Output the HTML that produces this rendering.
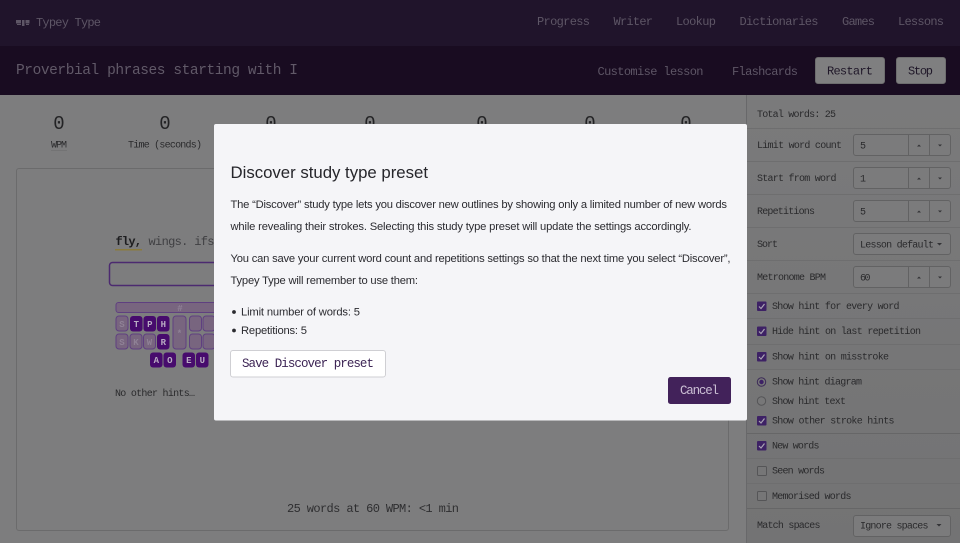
<!DOCTYPE html>
<html lang="en"><head><meta charset="utf-8"><title>Typey Type</title>
<style>
html,body{margin:0;padding:0;width:960px;height:543px;overflow:hidden;background:#7d7d7e}
.b{position:absolute}
svg{display:block;position:absolute;left:0;top:0}
text{font-family:"Liberation Mono",monospace;white-space:pre}
.n{font-size:12px;fill:#5e5666}
.s{font-size:10px;fill:#2a2a2c}
.m{font-family:"Liberation Sans",sans-serif;font-size:11.2px;fill:#2b2b30}
.k{font-size:9px;font-weight:bold;text-anchor:middle}
.div{stroke:#6e6e6f;stroke-width:1}
.dk{stroke:#666667;stroke-width:1}
.bx{fill:#7b7b7c;stroke:#626263;stroke-width:1}
</style></head><body>
<div class="b" style="left:0;top:0;width:960px;height:46px;background:#20142b"></div>
<div class="b" style="left:0;top:46px;width:960px;height:49px;background:#190c21"></div>
<div class="b" style="left:815px;top:57px;width:68px;height:25px;background:#7f7f80;border:1px solid #6d6d6e;border-radius:3px"></div>
<div class="b" style="left:896px;top:57px;width:48px;height:25px;background:#7f7f80;border:1px solid #6d6d6e;border-radius:3px"></div>
<div class="b" style="left:746px;top:95px;width:213px;height:448px;background:linear-gradient(#7a7a7b,#737374);border-left:1px solid #68686a"></div>
<div class="b" style="left:16px;top:168px;width:711px;height:361px;border:1px solid #6b6b6c;border-radius:3px"></div>
<svg width="960" height="543" viewBox="0 0 960 543" xmlns="http://www.w3.org/2000/svg">

<!-- logo -->
<g fill="#5e5666"><rect x="16" y="20" width="5" height="3.5"/><rect x="22" y="20" width="2.5" height="6"/><rect x="25.5" y="20" width="4" height="3.5"/><rect x="17" y="24" width="4" height="1"/><rect x="26" y="24" width="3" height="1"/></g>
<text x="36" y="26" class="n" textLength="65">Typey Type</text>
<text x="537" y="25" class="n" textLength="53">Progress</text>
<text x="613.5" y="25" class="n" textLength="39.5">Writer</text>
<text x="676" y="25" class="n" textLength="40">Lookup</text>
<text x="739.5" y="25" class="n" textLength="79">Dictionaries</text>
<text x="842" y="25" class="n" textLength="33">Games</text>
<text x="898" y="25" class="n" textLength="46">Lessons</text>

<text x="16" y="74" style="font-size:14.5px;fill:#615968" textLength="282">Proverbial phrases starting with I</text>
<text x="597.5" y="75" class="n" textLength="106">Customise lesson</text>
<text x="732" y="75" class="n" textLength="66">Flashcards</text>
<text x="827" y="74.5" style="font-size:12px;fill:#1f1728" textLength="46">Restart</text>
<text x="908" y="74.5" style="font-size:12px;fill:#1f1728" textLength="25">Stop</text>

<!-- stats -->
<g style="font-size:19px;fill:#232325" text-anchor="middle">
<text x="59" y="129">0</text><text x="165" y="129">0</text><text x="271" y="129">0</text><text x="370" y="129">0</text><text x="482" y="129">0</text><text x="590" y="129">0</text><text x="686" y="129">0</text></g>
<text x="51" y="147.5" class="s" textLength="16">WPM</text>
<line x1="51" x2="67" y1="150.5" y2="150.5" stroke="#737374"/>
<text x="128" y="147.5" class="s" textLength="74">Time (seconds)</text>

<!-- lesson -->
<text x="115.5" y="245" style="font-size:12px;font-weight:bold;fill:#1d1d1f" textLength="26.5">fly,</text>
<text x="148.5" y="245" style="font-size:12px;fill:#3f3f42" textLength="66">wings. ifs</text>
<rect x="115" y="249" width="27" height="1.5" fill="#8a7a3c"/>
<rect x="109.5" y="262.5" width="300" height="23" rx="3" fill="#7d7d7e" stroke="#4c2a70" stroke-width="1.5"/>

<!-- keyboard -->
<g fill="#78657f" stroke="#5f3f80" stroke-width="1">
<rect x="116" y="302.5" width="110" height="10" rx="2.5"/>
<rect x="116" y="316" width="12" height="15" rx="3"/>
<rect x="116" y="334" width="12" height="15" rx="3"/>
<rect x="130" y="334" width="12" height="15" rx="3"/>
<rect x="143.5" y="334" width="12" height="15" rx="3"/>
<rect x="173" y="316" width="13" height="33" rx="3"/>
<rect x="189.5" y="316" width="12" height="15" rx="3"/>
<rect x="203" y="316" width="12" height="15" rx="3"/>
<rect x="189.5" y="334" width="12" height="15" rx="3"/>
<rect x="203" y="334" width="12" height="15" rx="3"/>
</g>
<g fill="#470b6d">
<rect x="130" y="316" width="12.5" height="15.5" rx="3"/>
<rect x="143.5" y="316" width="12.5" height="15.5" rx="3"/>
<rect x="157" y="316" width="12.5" height="15.5" rx="3"/>
<rect x="157" y="334" width="12.5" height="15.5" rx="3"/>
<rect x="150" y="352.5" width="12.5" height="15" rx="3"/>
<rect x="163.5" y="352.5" width="12.5" height="15" rx="3"/>
<rect x="182.5" y="352.5" width="12.5" height="15" rx="3"/>
<rect x="196" y="352.5" width="12.5" height="15" rx="3"/>
</g>
<text class="k" x="136.3" y="327" fill="#b9adc3">T</text><text class="k" x="149.8" y="327" fill="#b9adc3">P</text><text class="k" x="163.3" y="327" fill="#b9adc3">H</text><text class="k" x="163.3" y="345" fill="#b9adc3">R</text>
<text class="k" x="156.3" y="363" fill="#b9adc3">A</text><text class="k" x="169.8" y="363" fill="#b9adc3">O</text><text class="k" x="188.8" y="363" fill="#b9adc3">E</text><text class="k" x="202.3" y="363" fill="#b9adc3">U</text>
<text class="k" x="122" y="327" fill="#8f8196">S</text><text class="k" x="122" y="345" fill="#8f8196">S</text><text class="k" x="136" y="345" fill="#8f8196">K</text><text class="k" x="149.5" y="345" fill="#8f8196">W</text>
<text class="k" x="179.5" y="336" fill="#8f8196">*</text><text class="k" x="180" y="311" fill="#8f8196">#</text>
<text x="115" y="396" class="s" textLength="80">No other hints…</text>
<text x="287" y="512" style="font-size:12px;fill:#2e2e30" textLength="172">25 words at 60 WPM: &lt;1 min</text>

<!-- sidebar dividers -->
<line class="div" x1="747" x2="960" y1="128.5" y2="128.5"/><line class="div" x1="747" x2="960" y1="161.5" y2="161.5"/><line class="div" x1="747" x2="960" y1="194.5" y2="194.5"/><line class="div" x1="747" x2="960" y1="227.5" y2="227.5"/><line class="div" x1="747" x2="960" y1="260.5" y2="260.5"/><line class="div" x1="747" x2="960" y1="293.5" y2="293.5"/><line class="div" x1="747" x2="960" y1="318.5" y2="318.5"/><line class="div" x1="747" x2="960" y1="344.5" y2="344.5"/><line class="div" x1="747" x2="960" y1="369.5" y2="369.5"/><line class="dk" x1="747" x2="960" y1="433.5" y2="433.5"/><line class="div" x1="747" x2="960" y1="458.5" y2="458.5"/><line class="div" x1="747" x2="960" y1="483.5" y2="483.5"/><line class="dk" x1="747" x2="960" y1="508.5" y2="508.5"/>
<text x="757" y="117" class="s" textLength="79">Total words: 25</text>
<text x="757" y="148" class="s" textLength="85">Limit word count</text>
<text x="757" y="181" class="s" textLength="79.5">Start from word</text>
<text x="757" y="214" class="s" textLength="58">Repetitions</text>
<text x="757" y="247" class="s" textLength="21">Sort</text>
<text x="757" y="280" class="s" textLength="69">Metronome BPM</text>

<!-- number inputs -->
<rect class="bx" x="853.5" y="134.5" width="97" height="21" rx="2.5"/><line x1="908.5" x2="908.5" y1="135" y2="155" stroke="#626263"/><line x1="929.5" x2="929.5" y1="135" y2="155" stroke="#626263"/>
<rect class="bx" x="853.5" y="167.5" width="97" height="21" rx="2.5"/><line x1="908.5" x2="908.5" y1="168" y2="188" stroke="#626263"/><line x1="929.5" x2="929.5" y1="168" y2="188" stroke="#626263"/>
<rect class="bx" x="853.5" y="200.5" width="97" height="21" rx="2.5"/><line x1="908.5" x2="908.5" y1="201" y2="221" stroke="#626263"/><line x1="929.5" x2="929.5" y1="201" y2="221" stroke="#626263"/>
<rect class="bx" x="853.5" y="233.5" width="97" height="21" rx="2.5"/>
<rect class="bx" x="853.5" y="266.5" width="97" height="21" rx="2.5"/><line x1="908.5" x2="908.5" y1="267" y2="287" stroke="#626263"/><line x1="929.5" x2="929.5" y1="267" y2="287" stroke="#626263"/>
<rect class="bx" x="853.5" y="515.5" width="97" height="21" rx="2.5"/>
<path fill="#333336" d="M917 146.5l2-2 2 2zM938 144.5h4l-2 2zM917 179.5l2-2 2 2zM938 177.5h4l-2 2zM917 212.5l2-2 2 2zM938 210.5h4l-2 2zM917 278.5l2-2 2 2zM938 276.5h4l-2 2zM937 243l2.5 2.5 2.5-2.5zM936.5 524l2.5 2.5 2.5-2.5z"/>
<text x="860" y="148.5" class="s">5</text>
<text x="860" y="181.5" class="s">1</text>
<text x="860" y="214.5" class="s">5</text>
<text x="860" y="247.5" class="s" textLength="74">Lesson default</text>
<text x="860" y="280.5" class="s" textLength="10.5">60</text>
<text x="860" y="528.5" class="s" textLength="68.5">Ignore spaces</text>

<!-- checkboxes -->
<rect x="757" y="301.5" width="9.5" height="9.5" rx="1" fill="#3d2165"/><path d="M759 306.5l2 2 3.5-4.5" fill="none" stroke="#a9a2b3" stroke-width="1.2"/>
<rect x="757" y="326.5" width="9.5" height="9.5" rx="1" fill="#3d2165"/><path d="M759 331.5l2 2 3.5-4.5" fill="none" stroke="#a9a2b3" stroke-width="1.2"/>
<rect x="757" y="352" width="9.5" height="9.5" rx="1" fill="#3d2165"/><path d="M759 357l2 2 3.5-4.5" fill="none" stroke="#a9a2b3" stroke-width="1.2"/>
<circle cx="761.5" cy="382" r="4.2" fill="#777778" stroke="#3d2b58"/><circle cx="761.5" cy="382" r="2.2" fill="#3d2165"/>
<circle cx="761.5" cy="401" r="4.2" fill="#777778" stroke="#555557"/>
<rect x="757" y="416" width="9.5" height="9.5" rx="1" fill="#3d2165"/><path d="M759 421l2 2 3.5-4.5" fill="none" stroke="#a9a2b3" stroke-width="1.2"/>
<rect x="757" y="441" width="9.5" height="9.5" rx="1" fill="#3d2165"/><path d="M759 446l2 2 3.5-4.5" fill="none" stroke="#a9a2b3" stroke-width="1.2"/>
<rect x="757.5" y="466.5" width="9" height="9" rx="1" fill="#767677" stroke="#555557"/>
<rect x="757.5" y="491.5" width="9" height="9" rx="1" fill="#767677" stroke="#555557"/>
<text x="772" y="309" class="s" textLength="127.5">Show hint for every word</text>
<text x="772" y="334" class="s" textLength="149">Hide hint on last repetition</text>
<text x="772" y="359.5" class="s" textLength="117">Show hint on misstroke</text>
<text x="772" y="384.5" class="s" textLength="90">Show hint diagram</text>
<text x="772" y="404" class="s" textLength="74">Show hint text</text>
<text x="772" y="423.5" class="s" textLength="122.5">Show other stroke hints</text>
<text x="772" y="448.5" class="s" textLength="47.5">New words</text>
<text x="772" y="473.5" class="s" textLength="53">Seen words</text>
<text x="772" y="499" class="s" textLength="79.5">Memorised words</text>
<text x="757" y="528" class="s" textLength="63.5">Match spaces</text>

<!-- modal -->
<rect x="214" y="124" width="533" height="296.5" rx="2" fill="#f5f5f8"/>
<text x="230.5" y="178" style="font-family:'Liberation Sans',sans-serif;font-size:16.8px;fill:#26262b" textLength="197.5">Discover study type preset</text>
<text x="230.5" y="208" class="m" textLength="496.5">The “Discover” study type lets you discover new outlines by showing only a limited number of new words</text>
<text x="230.5" y="230" class="m" textLength="461">while revealing their strokes. Selecting this study type preset will update the settings accordingly.</text>
<text x="230.5" y="262" class="m" textLength="500">You can save your current word count and repetitions settings so that the next time you select “Discover”,</text>
<text x="230.5" y="284" class="m" textLength="187.5">Typey Type will remember to use them:</text>
<circle cx="234" cy="312" r="1.9" fill="#2b2b30"/>
<circle cx="234" cy="330.5" r="1.9" fill="#2b2b30"/>
<text x="241" y="315.5" class="m" textLength="119">Limit number of words: 5</text>
<text x="241" y="334" class="m" textLength="66">Repetitions: 5</text>
<rect x="230.5" y="350.5" width="155" height="26.5" rx="2.5" fill="#fff" stroke="#cfcfd3"/>
<text x="242" y="367" style="font-size:12.5px;fill:#3d2555" textLength="132">Save Discover preset</text>
<rect x="668" y="377" width="63" height="27" rx="2.5" fill="#42225a"/>
<text x="680" y="394" style="font-size:12.5px;fill:#cbbfd4" textLength="39">Cancel</text>
</svg>
</body></html>
